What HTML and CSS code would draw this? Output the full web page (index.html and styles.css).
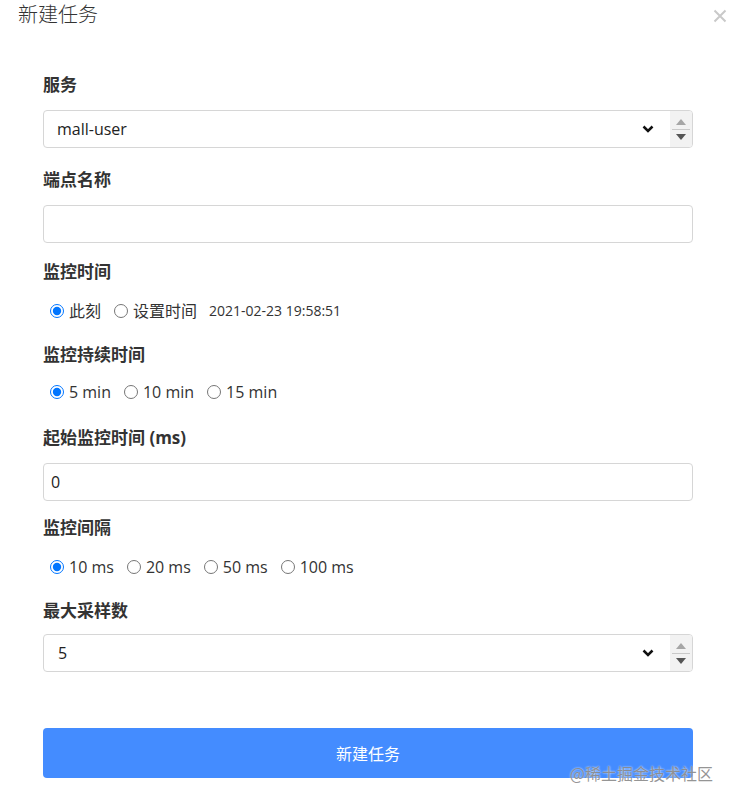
FILE: index.html
```html
<!DOCTYPE html>
<html lang="zh-CN">
<head>
  <meta charset="UTF-8" />
  <meta name="viewport" content="width=device-width, initial-scale=1.0"/>
  <title>新建任务</title>

  <link rel="stylesheet" href="styles.css">
</head>
<body>

  <!-- Dialog Header -->
  <header class="dialog-header">
    <h2 class="dialog-title">新建任务</h2>
    <button class="close-button" title="关闭">
      <svg width="14" height="14" viewBox="0 0 14 14">
        <path d="M1.5 1.5 L12.5 12.5 M12.5 1.5 L1.5 12.5" stroke="#c9c9c9" stroke-width="2" fill="none"/>
      </svg>
    </button>
  </header>

  <!-- Task Form -->
  <form class="task-form">

    <div class="field field-first">
      <label class="field-label">服务</label>
      <div class="picker">
        <select class="picker-select">
          <option>mall-user</option>
          <option>mall-order</option>
        </select>
        <svg class="chevron" width="12" height="8" viewBox="0 0 12 8">
          <path d="M1.5 1.5 L6 6 L10.5 1.5" stroke="#111" stroke-width="2.5" fill="none"/>
        </svg>
        <div class="spinner">
          <span class="spin-up"></span>
          <span class="spin-line"></span>
          <span class="spin-down"></span>
        </div>
      </div>
    </div>

    <div class="field">
      <label class="field-label">端点名称</label>
      <input class="text-input" type="text">
    </div>

    <div class="field radio-field">
      <label class="field-label">监控时间</label>
      <div class="radio-row">
        <label class="radio"><input type="radio" name="when" checked>此刻</label>
        <label class="radio"><input type="radio" name="when">设置时间</label>
        <span class="stamp">2021-02-23 19:58:51</span>
      </div>
    </div>

    <div class="field radio-field radio-field-tight">
      <label class="field-label">监控持续时间</label>
      <div class="radio-row">
        <label class="radio"><input type="radio" name="duration" checked>5 min</label>
        <label class="radio"><input type="radio" name="duration">10 min</label>
        <label class="radio"><input type="radio" name="duration">15 min</label>
      </div>
    </div>

    <div class="field field-tight">
      <label class="field-label">起始监控时间 (ms)</label>
      <input class="text-input" type="text" value="0">
    </div>

    <div class="field radio-field">
      <label class="field-label">监控间隔</label>
      <div class="radio-row">
        <label class="radio"><input type="radio" name="interval" checked>10 ms</label>
        <label class="radio"><input type="radio" name="interval">20 ms</label>
        <label class="radio"><input type="radio" name="interval">50 ms</label>
        <label class="radio"><input type="radio" name="interval">100 ms</label>
      </div>
    </div>

    <div class="field field-last">
      <label class="field-label">最大采样数</label>
      <div class="picker">
        <select class="picker-select picker-select-num">
          <option>5</option>
          <option>10</option>
        </select>
        <svg class="chevron" width="12" height="8" viewBox="0 0 12 8">
          <path d="M1.5 1.5 L6 6 L10.5 1.5" stroke="#111" stroke-width="2.5" fill="none"/>
        </svg>
        <div class="spinner">
          <span class="spin-up"></span>
          <span class="spin-line"></span>
          <span class="spin-down"></span>
        </div>
      </div>
    </div>

    <button type="button" class="submit-button">新建任务</button>
  </form>

  <div class="watermark">@稀土掘金技术社区</div>

</body>
</html>
```

FILE: styles.css
```css
body {
  font-family: 'Open Sans', 'Noto Sans CJK SC', sans-serif;
  font-size: 16px;
  color: #333;
  background: white;
  margin: 0;
  padding: 0;
  position: relative;
  min-height: 804px;
}

/* Header */
.dialog-header {
  display: flex;
  justify-content: space-between;
  align-items: center;
  height: 28px;
  padding: 0 7px 0 18px;
}

.dialog-title {
  margin: 0;
  font-family: 'Noto Sans CJK SC', sans-serif;
  font-size: 20px;
  font-weight: 300;
  line-height: 26px;
  color: #333;
}

.close-button {
  display: flex;
  padding: 0;
  margin-top: 4px;
  background: transparent;
  border: none;
  cursor: pointer;
}

/* Form */
.task-form {
  margin-top: 45px;
  padding: 0 41px 0 43px;
}

.field {
  margin-bottom: 17px;
}

.field-first {
  margin-bottom: 20px;
}

.field-tight {
  margin-bottom: 15px;
}

.radio-field {
  margin-bottom: 20px;
}

.radio-field-tight {
  margin-bottom: 22px;
}

.field-label {
  display: block;
  font-size: 17px;
  font-weight: bold;
  line-height: 24px;
  margin-bottom: 13px;
  color: #333;
}

.radio-field .field-label {
  margin-bottom: 15px;
}

.radio-field-tight .field-label {
  margin-bottom: 13px;
}

.field-last .field-label {
  margin-bottom: 11px;
}

.text-input {
  display: block;
  width: 100%;
  box-sizing: border-box;
  height: 38px;
  padding: 0 7px;
  border: 1px solid #d6d6d6;
  border-radius: 4px;
  font-family: inherit;
  font-size: 16px;
  color: #222;
  outline: none;
}

/* Select with spinner */
.picker {
  display: flex;
  align-items: stretch;
  height: 38px;
  box-sizing: border-box;
  border: 1px solid #d6d6d6;
  border-radius: 4px;
  overflow: hidden;
}

.picker-select {
  flex: 1;
  appearance: none;
  border: none;
  background: transparent;
  padding: 0 0 0 13px;
  font-family: inherit;
  font-size: 16px;
  color: #222;
  outline: none;
}

.picker-select-num {
  padding-left: 14px;
}

.chevron {
  align-self: center;
  margin-right: 16px;
}

.spinner {
  width: 22px;
  background: #f2f2f2;
  display: flex;
  flex-direction: column;
  align-items: center;
  justify-content: center;
}

.spin-up,
.spin-down {
  width: 0;
  height: 0;
  border-left: 5px solid transparent;
  border-right: 5px solid transparent;
}

.spin-up {
  border-bottom: 6px solid #a6a6a6;
}

.spin-down {
  border-top: 6px solid #555;
}

.spin-line {
  width: 18px;
  height: 1px;
  background: #c9c9c9;
  margin: 4px 0;
}

/* Radios */
.radio-row {
  display: flex;
  align-items: center;
  gap: 6px;
  height: 24px;
  line-height: 24px;
}

.radio {
  display: inline-flex;
  align-items: center;
  color: #333;
  cursor: pointer;
}

.radio input {
  width: 14px;
  height: 14px;
  margin: 0 5px 0 7px;
}

.stamp {
  margin-left: 6px;
  font-size: 14px;
  color: #333;
}

/* Submit */
.submit-button {
  display: block;
  width: 100%;
  height: 50px;
  margin-top: 56px;
  background: #448cff;
  color: white;
  border: none;
  border-radius: 4px;
  font-family: 'Noto Sans CJK SC', sans-serif;
  font-size: 16px;
  cursor: pointer;
}

.watermark {
  position: absolute;
  top: 761px;
  right: 21px;
  font-family: 'Noto Sans CJK SC', sans-serif;
  font-size: 16px;
  color: rgba(130, 130, 130, 0.85);
  text-shadow: 0 0 2px white;
}
```
